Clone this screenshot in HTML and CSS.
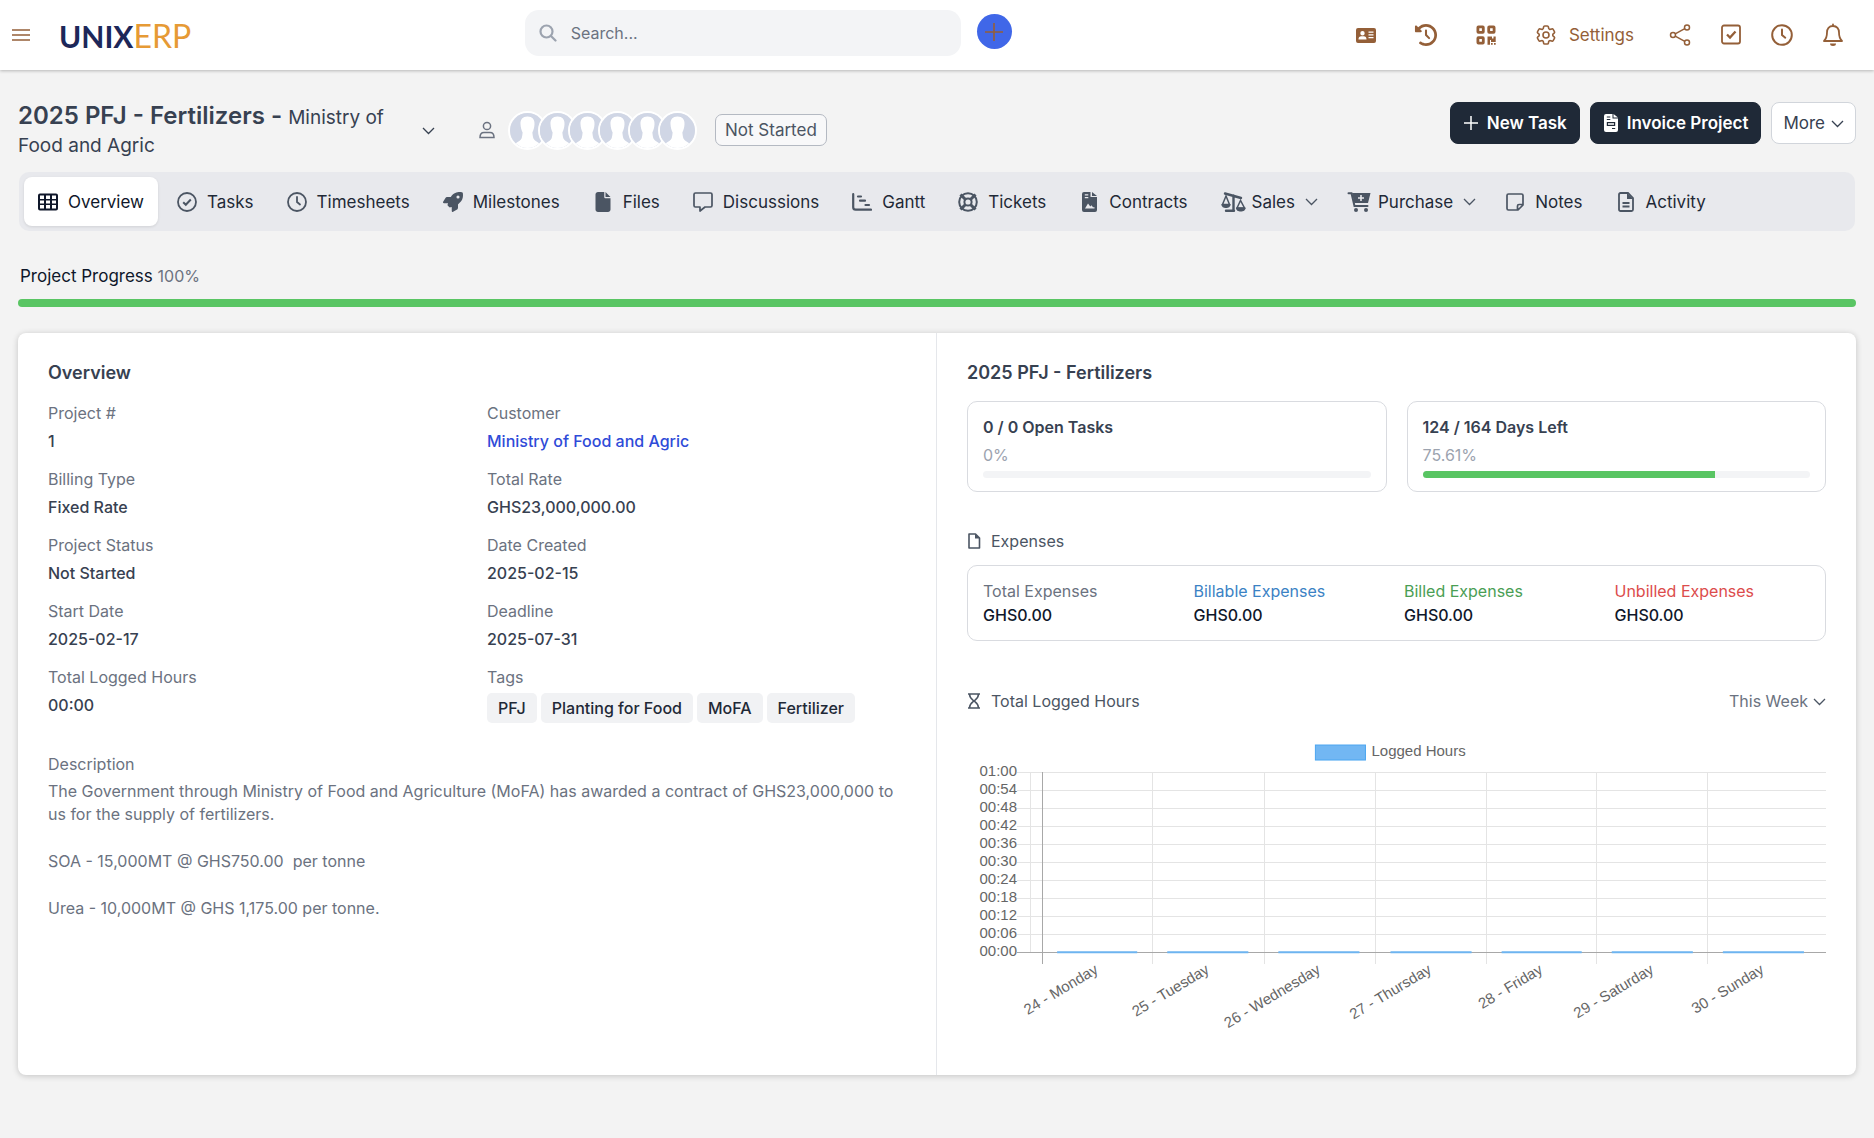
FILE: index.html
```html
<!DOCTYPE html>
<html lang="en">
<head>
    <meta charset="UTF-8">
    <meta name="viewport" content="width=device-width, initial-scale=1.0">
    <title>2025 PFJ - Fertilizers</title>
    <link rel="stylesheet" href="styles.css">
</head>
<body>
    <!-- shared icons -->
    <svg class="sprite" aria-hidden="true">
        <symbol id="chevron" viewBox="0 0 13 13">
            <path d="M1 4l5.500 5.500L12 4" fill="none" stroke="currentColor" stroke-width="1.300"/>
        </symbol>
        <symbol id="clock" viewBox="0 0 20 20">
            <g fill="none" stroke="currentColor" stroke-width="1.800" stroke-linecap="round">
                <circle cx="10" cy="10" r="9"/>
                <path d="M10 5v5l3 2.500"/>
            </g>
        </symbol>
        <symbol id="avatar" viewBox="0 0 36 36">
            <rect width="36" height="36" fill="#d0d6e5"/>
            <path d="M18 3.500c-5 0-7.500 3-7.200 8 .2 3 .8 6 2.200 8.500-.3 3-.5 4-1 6-1 2.500-3.500 3.500-6 5L8 36h20l2-5c-2.500-1.500-5-2.500-6-5-.5-2-.7-3-1-6 1.400-2.500 2-5.500 2.200-8.500.3-5-2.200-8-7.200-8z" fill="#fff"/>
        </symbol>
    </svg>

    <header class="topbar">
        <div class="brand">
            <button type="button" class="icon-btn" aria-label="Toggle menu">
                <svg class="burger" viewBox="0 0 18 14"><path d="M0 2h18M0 7h18M0 12h18" stroke="currentColor" stroke-width="1.300"/></svg>
            </button>
            <a href="#" class="logo"><span class="logo-unix">UNIX</span><span class="logo-erp">ERP</span></a>
        </div>
        <form class="search">
            <svg viewBox="0 0 18 18"><g fill="none" stroke="currentColor" stroke-width="2.200" stroke-linecap="round"><circle cx="7.500" cy="7.500" r="6"/><path d="M12 12l4.500 4.500"/></g></svg>
            <input type="search" placeholder="Search..." aria-label="Search">
        </form>
        <button type="button" class="quick-add" aria-label="Quick create">
            <svg viewBox="0 0 18 18"><path d="M9 0v18M0 9h18" stroke="currentColor" stroke-width="1.600"/></svg>
        </button>
        <nav class="top-links">
            <a href="#" aria-label="Contacts">
                <svg viewBox="0 0 24 24"><path fill="currentColor" fill-rule="evenodd" d="M4 5h16a2 2 0 012 2v11a2 2 0 01-2 2H4a2 2 0 01-2-2V7a2 2 0 012-2zm4.500 3a2.200 2.200 0 100 4.400 2.200 2.200 0 000-4.400zM4.500 16.500h8c0-2-1-3.200-2.700-3.200H7.200c-1.700 0-2.700 1.200-2.700 3.200zM14.500 8.500v1.300h5V8.500zm0 2.700v1.300h5v-1.300zm0 2.700v1.300h5v-1.300z"/></svg>
            </a>
            <a href="#" aria-label="History">
                <svg viewBox="-22 -22 556 556"><path fill="currentColor" d="M75 75L41 41C25.900 25.900 0 36.600 0 57.900V168c0 13.300 10.700 24 24 24H134.100c21.400 0 32.100-25.900 17-41l-30.800-30.800C155 85.500 203 64 256 64c106 0 192 86 192 192s-86 192-192 192c-40.800 0-78.600-12.700-109.700-34.400c-14.500-10.100-34.400-6.600-44.600 7.900s-6.600 34.400 7.900 44.600C151.200 495 201.700 512 256 512c141.400 0 256-114.600 256-256S397.400 0 256 0C185.300 0 121.300 28.700 75 75zm181 53c-13.300 0-24 10.700-24 24V256c0 6.400 2.500 12.500 7 17l72 72c9.400 9.400 24.600 9.400 33.900 0s9.400-24.600 0-33.900l-65-65V152c0-13.300-10.700-24-24-24z"/></svg>
            </a>
            <a href="#" aria-label="QR code">
                <svg viewBox="0 0 24 24"><g fill="none" stroke="currentColor" stroke-width="2.800"><rect x="3.900" y="3.900" width="5.400" height="5.400" rx=".5"/><rect x="14.700" y="3.900" width="5.400" height="5.400" rx=".5"/><rect x="3.900" y="14.700" width="5.400" height="5.400" rx=".5"/></g><path fill="currentColor" d="M13.500 13.500h4.500v2h1.500v-2h2.200v5.500h-4.700v-2h-1v4.700h-2.500zM17 20h1.700v1.700H17zM20 20h1.700v1.700H20z"/></svg>
            </a>
            <a href="#" class="settings">
                <svg viewBox="0 0 24 24"><g fill="none" stroke="currentColor" stroke-width="1.600"><path d="M9.594 3.940c.09-.542.56-.94 1.110-.94h2.593c.55 0 1.020.398 1.110.94l.213 1.281c.063.374.313.686.645.87.074.04.147.083.22.127.325.196.72.257 1.075.124l1.217-.456a1.125 1.125 0 0 1 1.370.49l1.296 2.247a1.125 1.125 0 0 1-.26 1.431l-1.003.827c-.293.241-.438.613-.43.992a7.723 7.723 0 0 1 0 .255c-.008.378.137.75.43.991l1.004.827c.424.35.534.955.26 1.430l-1.298 2.247a1.125 1.125 0 0 1-1.369.491l-1.217-.456c-.355-.133-.75-.072-1.076.124a6.470 6.470 0 0 1-.22.128c-.331.183-.581.495-.644.869l-.213 1.281c-.09.543-.56.94-1.110.94h-2.594c-.55 0-1.019-.398-1.110-.94l-.213-1.281c-.062-.374-.312-.686-.644-.87a6.520 6.520 0 0 1-.22-.127c-.325-.196-.72-.257-1.076-.124l-1.217.456a1.125 1.125 0 0 1-1.369-.49l-1.297-2.247a1.125 1.125 0 0 1 .26-1.431l1.004-.827c.292-.24.437-.613.43-.991a6.932 6.932 0 0 1 0-.255c.007-.38-.138-.751-.43-.992l-1.004-.827a1.125 1.125 0 0 1-.26-1.430l1.297-2.247a1.125 1.125 0 0 1 1.370-.491l1.216.456c.356.133.751.072 1.076-.124.072-.044.146-.086.22-.128.332-.183.582-.495.644-.869l.214-1.280Z"/><circle cx="12" cy="12" r="3"/></g></svg>
                Settings
            </a>
        </nav>
        <nav class="top-actions">
            <a href="#" aria-label="Share">
                <svg viewBox="0 0 24 24"><g fill="none" stroke="currentColor" stroke-width="1.500"><circle cx="5" cy="12" r="2.500"/><circle cx="19" cy="4.500" r="2.500"/><circle cx="19" cy="19.500" r="2.500"/><path d="M7.200 10.800l9.600-5.200M7.200 13.200l9.600 5.200"/></g></svg>
            </a>
            <a href="#" aria-label="To do">
                <svg viewBox="0 0 24 24"><g fill="none" stroke="currentColor" stroke-width="1.800"><rect x="3" y="2.500" width="18" height="18" rx="2"/><path d="M8 11.500l3 3 5.500-6" stroke-width="2.300"/></g></svg>
            </a>
            <a href="#" aria-label="Timers"><svg viewBox="-1 -1 22 22"><use href="#clock" width="20" height="20"/></svg></a>
            <a href="#" aria-label="Notifications">
                <svg viewBox="0 0 24 24"><path d="M12 3v-1.500M12 3c-4 0-6 3-6 6.500 0 4-1 6.500-3 8.500h18c-2-2-3-4.500-3-8.500C18 6 16 3 12 3z" fill="none" stroke="currentColor" stroke-width="1.800" stroke-linecap="round" stroke-linejoin="round"/><path fill="currentColor" d="M9 20.500h6a3 2.500 0 01-6 0z"/></svg>
            </a>
        </nav>
    </header>

    <main>
        <section class="project-head">
            <h1>2025 PFJ - Fertilizers - <small>Ministry of Food and Agric</small></h1>
            <button type="button" class="icon-btn project-switch" aria-label="Switch project"><svg class="chevron"><use href="#chevron"/></svg></button>
            <div class="members">
                <svg class="user" viewBox="0 0 16 18"><g fill="none" stroke="currentColor" stroke-width="1.500"><circle cx="8" cy="5" r="3.600"/><path d="M1 16.500c0-3.500 1.500-5 4-5h6c2.500 0 4 1.500 4 5z"/></g></svg>
                <div class="avatars">
                    <svg><use href="#avatar"/></svg>
                    <svg><use href="#avatar"/></svg>
                    <svg><use href="#avatar"/></svg>
                    <svg><use href="#avatar"/></svg>
                    <svg><use href="#avatar"/></svg>
                    <svg><use href="#avatar"/></svg>
                </div>
            </div>
            <span class="status">Not Started</span>
            <div class="actions">
                <button type="button" class="btn btn-dark">
                    <svg viewBox="0 0 16 16"><path d="M8 1v14M1 8h14" stroke="currentColor" stroke-width="1.500"/></svg>
                    New Task
                </button>
                <button type="button" class="btn btn-dark">
                    <svg viewBox="0 0 14 18"><path fill="currentColor" fill-rule="evenodd" d="M2 0h6.500v4.500H14V16a2 2 0 01-2 2H2a2 2 0 01-2-2V2a2 2 0 012-2zm.8 2.500v1h3.500v-1zm0 2.500v1h3.500V5zm0 3v4h8.400V8zM4 9.200h6v1.600H4zm4 4.800v1h3.200v-1zM9.500 0L14 3.500H9.500z"/></svg>
                    Invoice Project
                </button>
                <button type="button" class="btn btn-light">More <svg class="chevron"><use href="#chevron"/></svg></button>
            </div>
        </section>

        <nav class="tabs">
            <a href="#" class="tab active">
                <svg viewBox="0 0 20 20"><path fill="currentColor" fill-rule="evenodd" d="M2 1.500h16a2 2 0 012 2v13a2 2 0 01-2 2H2a2 2 0 01-2-2v-13a2 2 0 012-2zM2 3.500V7h4V3.500zm6 0V7h4V3.500zm6 0V7h4V3.500zM2 8.500v3h4v-3zm6 0v3h4v-3zm6 0v3h4v-3zM2 13v3.500h4V13zm6 0v3.500h4V13zm6 0v3.500h4V13z"/></svg>
                Overview
            </a>
            <a href="#" class="tab">
                <svg viewBox="0 0 20 20"><g fill="none" stroke="currentColor" stroke-width="1.800"><circle cx="10" cy="10" r="9"/><path d="M6.200 10.200l2.600 2.600 5-5.300" stroke-width="2"/></g></svg>
                Tasks
            </a>
            <a href="#" class="tab"><svg><use href="#clock"/></svg> Timesheets</a>
            <a href="#" class="tab">
                <svg viewBox="0 0 512 512"><path fill="currentColor" d="M156.600 384.900L125.700 354c-8.500-8.500-11.500-20.800-7.700-32.200c3-8.900 7-20.500 11.800-33.800L24 288c-8.600 0-16.600-4.600-20.900-12.100s-4.200-16.700 .2-24.100l52.500-88.500c13-21.900 36.500-35.300 61.900-35.300l82.300 0c2.400-4 4.800-7.700 7.200-11.300C289.100-4.100 411.100-8.100 483.900 5.300c11.600 2.100 20.600 11.200 22.800 22.800c13.400 72.900 9.300 194.800-111.400 276.700c-3.500 2.400-7.300 4.800-11.300 7.200v82.300c0 25.400-13.400 49-35.300 61.900l-88.500 52.500c-7.400 4.400-16.600 4.500-24.100 .2s-12.100-12.200-12.100-20.900V380.800c-14.100 4.900-26.400 8.900-35.700 11.900c-11.200 3.600-23.400 .5-31.800-7.800zM384 168a40 40 0 1 0 0-80 40 40 0 1 0 0 80z"/></svg>
                Milestones
            </a>
            <a href="#" class="tab">
                <svg viewBox="-64 0 512 512"><path fill="currentColor" d="M0 64C0 28.700 28.700 0 64 0H224V128c0 17.700 14.300 32 32 32H384V448c0 35.300-28.700 64-64 64H64c-35.300 0-64-28.700-64-64V64zm384 64H256V0L384 128z"/></svg>
                Files
            </a>
            <a href="#" class="tab">
                <svg viewBox="0 0 20 20"><path d="M2.500 1h15A1.500 1.500 0 0119 2.500v11a1.500 1.500 0 01-1.500 1.500H12l-5 4v-4H2.500A1.500 1.500 0 011 13.500v-11A1.500 1.500 0 012.500 1z" fill="none" stroke="currentColor" stroke-width="1.700" stroke-linejoin="round"/></svg>
                Discussions
            </a>
            <a href="#" class="tab">
                <svg viewBox="0 0 20 20"><path d="M1.200 2.200v13a2.500 2.500 0 002.500 2.500H19M6 4.500h3M8 8.700h5M13.500 13h3.500" fill="none" stroke="currentColor" stroke-width="2.200" stroke-linecap="round"/></svg>
                Gantt
            </a>
            <a href="#" class="tab">
                <svg viewBox="0 0 20 20"><g fill="none" stroke="currentColor" stroke-width="2"><circle cx="10" cy="10" r="8.800"/><circle cx="10" cy="10" r="3.600"/><path d="M2.500 2.500l5 5M17.500 2.500l-5 5M2.500 17.500l5-5M17.500 17.500l-5-5" stroke-width="3"/></g></svg>
                Tickets
            </a>
            <a href="#" class="tab">
                <svg viewBox="-3 0 20 20"><path fill="currentColor" fill-rule="evenodd" d="M2 0h6.500v5H15v13a2 2 0 01-2 2H2a2 2 0 01-2-2V2a2 2 0 012-2zm.8 2.300v1.200h3.500V2.300zm0 2.700v1.200h3.500V5zM3 16.500h9.500v-1.200H11l-1.500-2-1.200 1.200L6 11.500zM10 0l5 4h-5z"/></svg>
                Contracts
            </a>
            <button type="button" class="tab tab-menu">
                <svg class="wide" viewBox="0 0 25 20"><g fill="none" stroke="currentColor"><path d="M4 1.500l16 4.500M12.500 3.500v15M5 18.800h8" stroke-width="2.400" stroke-linecap="round"/><path d="M5 4L1.500 12.500h7zM19.500 8.500L16 16h7.500z" stroke-width="1.500"/></g><path fill="currentColor" d="M.5 12h9c0 3-2 4-4.500 4S.5 15 .5 12zM15 15.500h9.500c0 3-2 4-4.700 4S15 18.500 15 15.500z"/></svg>
                Sales
                <svg class="chevron"><use href="#chevron"/></svg>
            </button>
            <button type="button" class="tab tab-menu">
                <svg class="wide" viewBox="0 0 25 20"><path d="M1.500 1.200h3L7.500 14h13" fill="none" stroke="currentColor" stroke-width="2" stroke-linecap="round"/><path fill="currentColor" fill-rule="evenodd" d="M5 1h18.500l-2.500 10H7.300zM13.200 3v2.200H11v1.600h2.200V9h1.600V6.800H17V5.200h-2.200V3z"/><circle cx="9" cy="18" r="2" fill="currentColor"/><circle cx="19" cy="18" r="2" fill="currentColor"/></svg>
                Purchase
                <svg class="chevron"><use href="#chevron"/></svg>
            </button>
            <a href="#" class="tab">
                <svg viewBox="0 0 20 20"><path d="M3.500 2h13A1.500 1.500 0 0118 3.500V13l-5 5H3.500A1.500 1.500 0 012 16.500v-13A1.500 1.500 0 013.500 2zM18 12.500h-4a1.500 1.500 0 00-1.500 1.500v4" fill="none" stroke="currentColor" stroke-width="1.700"/></svg>
                Notes
            </a>
            <a href="#" class="tab">
                <svg viewBox="0 0 20 20"><path d="M4.500 1H12l5 5v11.500a1.500 1.500 0 01-1.500 1.500h-11A1.500 1.500 0 013 17.500v-15A1.500 1.500 0 014.500 1zM6.500 11h7M6.500 14.500h7" fill="none" stroke="currentColor" stroke-width="1.800"/><path fill="currentColor" d="M11 1v6h6z"/></svg>
                Activity
            </a>
        </nav>

        <p class="progress-title">Project Progress <span>100%</span></p>
        <div class="bar bar-main"><div class="bar-fill" style="width: 100%"></div></div>

        <div class="panel">
            <section class="panel-left">
                <h2>Overview</h2>
                <dl class="details">
                    <div><dt>Project #</dt><dd>1</dd></div>
                    <div><dt>Customer</dt><dd><a href="#">Ministry of Food and Agric</a></dd></div>
                    <div><dt>Billing Type</dt><dd>Fixed Rate</dd></div>
                    <div><dt>Total Rate</dt><dd>GHS23,000,000.00</dd></div>
                    <div><dt>Project Status</dt><dd>Not Started</dd></div>
                    <div><dt>Date Created</dt><dd>2025-02-15</dd></div>
                    <div><dt>Start Date</dt><dd>2025-02-17</dd></div>
                    <div><dt>Deadline</dt><dd>2025-07-31</dd></div>
                    <div><dt>Total Logged Hours</dt><dd>00:00</dd></div>
                    <div>
                        <dt>Tags</dt>
                        <dd class="tags"><span>PFJ</span><span>Planting for Food</span><span>MoFA</span><span>Fertilizer</span></dd>
                    </div>
                </dl>
                <div class="description">
                    <h3>Description</h3>
                    <p>The Government through Ministry of Food and Agriculture (MoFA) has awarded a contract of GHS23,000,000 to us for the supply of fertilizers.</p>
                    <p>SOA - 15,000MT @ GHS750.00&nbsp; per tonne</p>
                    <p>Urea - 10,000MT @ GHS 1,175.00 per tonne.</p>
                </div>
            </section>

            <section class="panel-right">
                <h2>2025 PFJ - Fertilizers</h2>
                <div class="stats">
                    <div class="box">
                        <h3>0 / 0 Open Tasks</h3>
                        <p>0%</p>
                        <div class="bar"><div class="bar-fill" style="width: 0%"></div></div>
                    </div>
                    <div class="box">
                        <h3>124 / 164 Days Left</h3>
                        <p>75.61%</p>
                        <div class="bar"><div class="bar-fill" style="width: 75.61%"></div></div>
                    </div>
                </div>

                <div class="section-title expenses-title">
                    <svg viewBox="0 0 14 16"><path d="M2 1h6.500L12.500 5v10H2z" fill="none" stroke="currentColor" stroke-width="1.600" stroke-linejoin="round"/><path fill="currentColor" d="M8 1v4.500h5z"/></svg>
                    <h3>Expenses</h3>
                </div>
                <dl class="box expenses">
                    <div><dt>Total Expenses</dt><dd>GHS0.00</dd></div>
                    <div><dt class="info">Billable Expenses</dt><dd>GHS0.00</dd></div>
                    <div><dt class="success">Billed Expenses</dt><dd>GHS0.00</dd></div>
                    <div><dt class="danger">Unbilled Expenses</dt><dd>GHS0.00</dd></div>
                </dl>

                <div class="section-title hours-title">
                    <svg viewBox="0 0 14 16"><path d="M1 1h12M1 15h12M2.500 1c0 4 2 5 4.500 7-2.500 2-4.500 3-4.500 7M11.500 1c0 4-2 5-4.500 7 2.500 2 4.500 3 4.500 7" fill="none" stroke="currentColor" stroke-width="1.500"/></svg>
                    <h3>Total Logged Hours</h3>
                    <label class="period">
                        <select aria-label="Period"><option>This Week</option></select>
                        <svg class="chevron"><use href="#chevron"/></svg>
                    </label>
                </div>

                <svg class="chart" viewBox="0 0 858 311" role="img" aria-label="Logged hours by day">
                    <rect class="legend" x="348" y="11" width="50" height="15"/>
                    <text x="404" y="22">Logged Hours</text>
                    <path class="grid" d="M50 38H858M50 56H858M50 74H858M50 92H858M50 110H858M50 128H858M50 146H858M50 164H858M50 182H858M50 200H858"/>
                    <path class="grid" d="M63 38V218M185 38V230M297 38V230M408 38V230M519 38V230M629 38V230M740 38V230"/>
                    <path class="axis" d="M75 38V230M50 218H858"/>
                    <g class="bars">
                        <rect x="90" y="217" width="80" height="2"/>
                        <rect x="200" y="217" width="81" height="2"/>
                        <rect x="311" y="217" width="81" height="2"/>
                        <rect x="423" y="217" width="81" height="2"/>
                        <rect x="534" y="217" width="80" height="2"/>
                        <rect x="644" y="217" width="81" height="2"/>
                        <rect x="755" y="217" width="81" height="2"/>
                    </g>
                    <g text-anchor="end">
                        <text x="50" y="42">01:00</text>
                        <text x="50" y="60">00:54</text>
                        <text x="50" y="78">00:48</text>
                        <text x="50" y="96">00:42</text>
                        <text x="50" y="114">00:36</text>
                        <text x="50" y="132">00:30</text>
                        <text x="50" y="150">00:24</text>
                        <text x="50" y="168">00:18</text>
                        <text x="50" y="186">00:12</text>
                        <text x="50" y="204">00:06</text>
                        <text x="50" y="222">00:00</text>
                    </g>
                    <g text-anchor="end">
                        <text transform="translate(132 238) rotate(-31)">24 - Monday</text>
                        <text transform="translate(243 238) rotate(-31)">25 - Tuesday</text>
                        <text transform="translate(354 238) rotate(-31)">26 - Wednesday</text>
                        <text transform="translate(465 238) rotate(-31)">27 - Thursday</text>
                        <text transform="translate(576 238) rotate(-31)">28 - Friday</text>
                        <text transform="translate(687 238) rotate(-31)">29 - Saturday</text>
                        <text transform="translate(797 238) rotate(-31)">30 - Sunday</text>
                    </g>
                </svg>
            </section>
        </div>
    </main>
</body>
</html>
```
FILE: styles.css
```css
* {
    box-sizing: border-box;
}
body {
    margin: 0;
    font-family: Inter, sans-serif;
    font-size: 16px;
    line-height: 24px;
    color: #374151;
    background-color: #f3f3f3;
}
h1, h2, h3, p, dl, dt, dd {
    margin: 0;
    font-size: 16px;
    font-weight: 400;
}
a {
    color: inherit;
    text-decoration: none;
}
button, input, select {
    font: inherit;
    color: inherit;
}
button {
    cursor: pointer;
}
svg {
    display: block;
    flex-shrink: 0;
}
.sprite {
    position: absolute;
    width: 0;
    height: 0;
}
.icon-btn {
    padding: 0;
    border: none;
    background: none;
}
.chevron {
    width: 13px;
    height: 13px;
}

/* top bar */
.topbar {
    display: flex;
    align-items: center;
    height: 70px;
    background: white;
    color: #945f38;
    box-shadow: 0 1px 3px rgba(0, 0, 0, 0.25);
}
.brand {
    display: flex;
    align-items: center;
    flex: 0 0 28%;
    padding-left: 12px;
}
.burger {
    width: 18px;
    height: 14px;
}
.logo {
    display: flex;
    align-items: baseline;
    margin-left: 29px;
    padding-top: 2px;
    font-family: Lato, sans-serif;
    line-height: 36px;
}
.logo-unix {
    font-size: 30px;
    font-weight: 700;
    color: #1d2759;
}
.logo-erp {
    font-size: 32px;
    color: #e69a35;
}
.search {
    display: flex;
    align-items: center;
    flex: 0 1 436px;
    gap: 14px;
    height: 46px;
    margin-bottom: 4px;
    padding: 0 14px;
    background: #f3f4f6;
    border-radius: 14px;
    color: #9ca3af;
}
.search svg {
    width: 18px;
    height: 18px;
}
.search input {
    flex: 1;
    min-width: 0;
    padding: 0;
    border: none;
    outline: none;
    background: none;
    color: #374151;
}
.search input::placeholder {
    color: #6b7280;
}
.quick-add {
    display: flex;
    align-items: center;
    justify-content: center;
    width: 35px;
    height: 35px;
    margin: 0 16px 7px;
    padding: 0;
    border: none;
    border-radius: 50%;
    background: #4067e8;
}
.quick-add svg {
    width: 18px;
    height: 18px;
}
.top-links, .top-actions {
    display: flex;
    align-items: center;
    font-size: 17px;
}
.top-links {
    gap: 36px;
    margin-left: auto;
}
.top-actions {
    gap: 27px;
    margin-left: 34px;
    padding-right: 29px;
}
.top-links svg, .top-actions svg {
    width: 24px;
    height: 24px;
}
.settings {
    display: flex;
    gap: 11px;
}

/* page */
main {
    padding: 32px 18px;
}
.project-head {
    display: flex;
    align-items: center;
}
.project-head h1 {
    width: 390px;
    font-size: 24px;
    font-weight: 600;
    line-height: 28px;
}
.project-head small {
    font-size: 19px;
    font-weight: 400;
    line-height: 24px;
}
.project-switch {
    margin-left: 14px;
}
.members {
    display: flex;
    align-items: center;
    gap: 13px;
    margin-left: 44px;
    color: #6b7280;
}
.user {
    width: 16px;
    height: 18px;
}
.avatars {
    display: flex;
}
.avatars svg {
    width: 39px;
    height: 39px;
    border: 2px solid white;
    border-radius: 50%;
}
.avatars svg + svg {
    margin-left: -9px;
}
.status {
    margin-left: 18px;
    padding: 3px 9px;
    border: 1px solid #b4b9c2;
    border-radius: 7px;
    background: #f8f8f9;
    color: #4b5563;
    font-size: 17px;
}
.actions {
    display: flex;
    align-self: flex-start;
    gap: 10px;
    margin-left: auto;
    font-size: 17px;
}
.btn {
    display: flex;
    align-items: center;
    gap: 8px;
    height: 42px;
    padding: 0 12px;
    border: 1px solid #1f2937;
    border-radius: 8px;
}
.btn-dark {
    background: #1f2937;
    color: white;
    font-weight: 600;
}
.btn-dark svg {
    height: 18px;
    width: 16px;
}
.btn-light {
    gap: 6px;
    padding: 0 11px;
    border-color: #d1d5db;
    background: white;
}

.tabs {
    display: flex;
    gap: 5px;
    margin: 14px 1px 0;
    padding: 5px;
    border-radius: 10px;
    background: #e8e9ed;
    font-size: 17px;
}
.tab {
    display: flex;
    align-items: center;
    gap: 10px;
    height: 49px;
    padding: 0 14px;
    border: none;
    border-radius: 8px;
    background: none;
    color: #1f2937;
    white-space: nowrap;
}
.tab svg {
    width: 20px;
    height: 20px;
    color: #4b5563;
}
.tab.active {
    background: white;
    box-shadow: 0 1px 3px rgba(0, 0, 0, 0.1);
}
.tab.active, .tab.active svg {
    color: #0f172a;
}
.tab-menu {
    gap: 6px;
    padding-right: 10px;
}
.tab svg.wide {
    width: 25px;
}
.tab svg.chevron {
    width: 13px;
    height: 13px;
    margin-left: 4px;
}

.progress-title {
    margin: 33px 2px 11px;
    color: #0f172a;
    font-size: 17px;
}
.progress-title span {
    color: #6b7280;
    font-size: 16px;
}
.bar {
    height: 7px;
    overflow: hidden;
    border-radius: 4px;
    background: #f3f4f6;
}
.bar-main {
    height: 8px;
}
.bar-fill {
    height: 100%;
    background: #59c563;
}

/* overview panel */
.panel {
    display: grid;
    grid-template-columns: 1fr 1fr;
    margin-top: 26px;
    border-radius: 8px;
    background: white;
    box-shadow: 0 1px 6px rgba(0, 0, 0, 0.2);
}
.panel-left, .panel-right {
    padding: 28px 30px 30px;
}
.panel-left {
    border-right: 1px solid #e5e7eb;
}
.panel h2 {
    margin-bottom: 16px;
    font-size: 18px;
    font-weight: 600;
}
.details {
    display: grid;
    grid-template-columns: 1fr 1fr;
    gap: 14px 20px;
}
.details dt, .expenses dt {
    color: #6b7280;
}
.details dd {
    margin-top: 4px;
    font-weight: 500;
}
.details a {
    color: #2f4bd8;
}
.details .tags {
    display: flex;
    flex-wrap: wrap;
    gap: 4px;
    color: #1f2937;
}
.tags span {
    padding: 3px 11px;
    border-radius: 5px;
    background: #f1f2f4;
}
.description {
    margin-top: 29px;
    color: #6b7280;
}
.description h3 {
    margin-bottom: 4px;
}
.description p {
    line-height: 23px;
}
.description p + p {
    margin-top: 24px;
}
.stats {
    display: grid;
    grid-template-columns: 1fr 1fr;
    gap: 20px;
}
.box {
    padding: 13px 15px;
    border: 1px solid #d9dbe0;
    border-radius: 10px;
}
.stats h3 {
    font-weight: 600;
}
.stats p {
    margin: 4px 0;
    color: #9ca3af;
}
.section-title {
    display: flex;
    align-items: center;
    color: #4b5563;
}
.section-title > svg {
    width: 14px;
    height: 16px;
    margin-right: 10px;
}
.expenses-title {
    margin: 37px 0 12px;
}
.expenses {
    display: grid;
    grid-template-columns: repeat(4, 1fr);
    gap: 15px;
}
.expenses dd {
    font-weight: 500;
    color: #0f172a;
}
.expenses .info {
    color: #3b82c4;
}
.expenses .success {
    color: #4a9e54;
}
.expenses .danger {
    color: #dc4c4c;
}
.hours-title {
    margin: 48px 0 21px;
}
.period {
    display: flex;
    align-items: center;
    gap: 5px;
    margin-left: auto;
}
.period select {
    padding: 0;
    border: none;
    background: none;
    appearance: none;
    color: #6b7280;
}

/* chart */
.chart {
    width: 100%;
    height: auto;
}
.chart text {
    font-family: "Liberation Sans", sans-serif;
    font-size: 15px;
    fill: #666;
}
.grid, .axis {
    stroke: #e4e4e4;
    shape-rendering: crispEdges;
}
.axis {
    stroke: #a8a8a8;
}
.legend {
    fill: #72b7f3;
    stroke: #4ca6f0;
}
.bars {
    fill: #6db4f0;
}
```
